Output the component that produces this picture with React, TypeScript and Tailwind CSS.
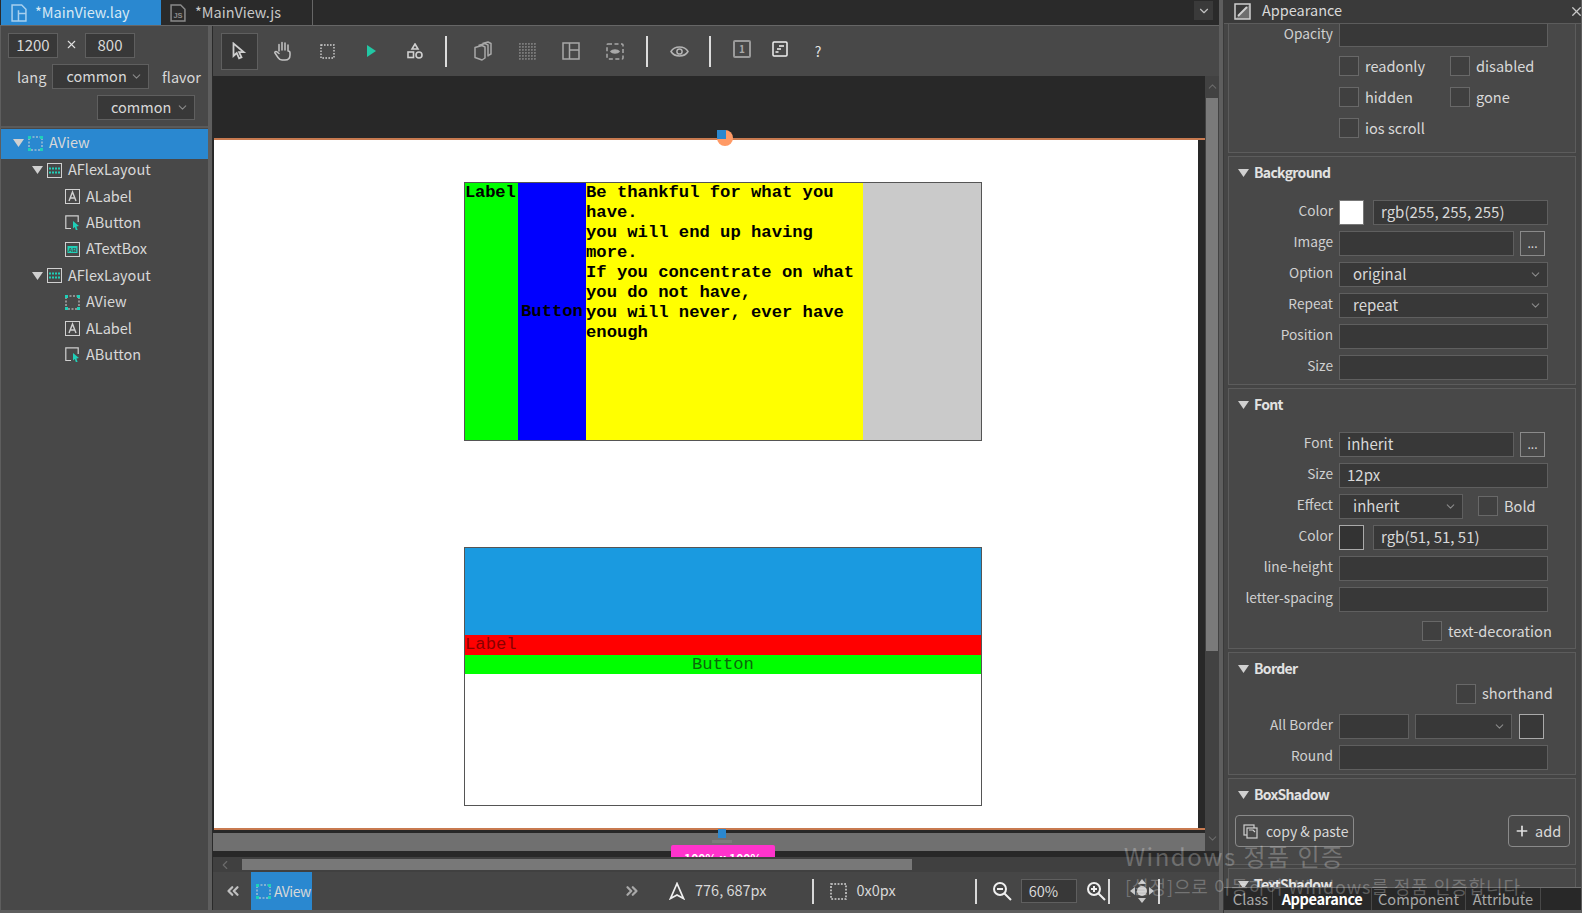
import type { ReactNode } from 'react';
import { ChevronDown, ChevronLeft, ChevronUp, ChevronsLeft, ChevronsRight, Plus, X } from 'lucide-react';

const TEAL = '#1fd0b8';

function Arrow() {
  return (
    <svg width="11" height="8" viewBox="0 0 11 8" className="shrink-0">
      <polygon points="0,0 11,0 5.5,8" fill="#d0d0d0" />
    </svg>
  );
}

function ViewIcon({ size = 15 }: { size?: number }) {
  return (
    <svg width={size} height={size} viewBox="0 0 15 15" className="shrink-0">
      <rect x="1" y="1" width="13" height="13" fill="none" stroke="#d8d8d8" strokeDasharray="2 1.5" />
      <rect x="0" y="0" width="3" height="3" fill={TEAL} />
      <rect x="12" y="0" width="3" height="3" fill={TEAL} />
      <rect x="0" y="12" width="3" height="3" fill={TEAL} />
      <rect x="12" y="12" width="3" height="3" fill={TEAL} />
    </svg>
  );
}

function FlexIcon() {
  return (
    <svg width="15" height="15" viewBox="0 0 15 15" className="shrink-0">
      <rect x="0.5" y="0.5" width="14" height="14" fill="none" stroke="#d0d0d0" />
      <path d="M2 5.5h11M2 9.5h11" stroke={TEAL} strokeWidth="2" strokeDasharray="2 1" />
    </svg>
  );
}

function LabelIcon() {
  return (
    <svg width="15" height="15" viewBox="0 0 15 15" className="shrink-0">
      <rect x="0.5" y="0.5" width="14" height="14" fill="none" stroke="#d0d0d0" />
      <path d="M4 12 7.5 3 11 12M5.2 9h4.6" fill="none" stroke="#d0d0d0" strokeWidth="1.4" />
    </svg>
  );
}

function ButtonIcon() {
  return (
    <svg width="15" height="15" viewBox="0 0 15 15" className="shrink-0">
      <path d="M6 13.5H.8V.8h12.4V7" fill="none" stroke="#d0d0d0" strokeWidth="1.2" />
      <polygon points="8,6 14,11 11.4,11.4 12.6,15 10.8,15 9.8,12 8,13.6" fill={TEAL} />
    </svg>
  );
}

function TextBoxIcon() {
  return (
    <svg width="15" height="15" viewBox="0 0 15 15" className="shrink-0">
      <rect x="0.5" y="0.5" width="14" height="14" fill="none" stroke="#d0d0d0" />
      <rect x="2.5" y="4" width="10" height="7" fill={TEAL} />
      <text x="7.5" y="9.8" textAnchor="middle" fontSize="6" fontWeight="700" fill="#484848" fontFamily="Liberation Sans, sans-serif">AB</text>
    </svg>
  );
}

function TreeRow({ level, icon, label, open, selected }: { level: number; icon: ReactNode; label: string; open?: boolean; selected?: boolean }) {
  const pad = level === 0 ? 'pl-[12px]' : level === 1 ? 'pl-[31px]' : 'pl-[64px]';
  return (
    <div className={`flex items-center ${pad} ${selected ? 'h-[30px] -mb-[2px] pb-[2px] bg-[#2a88d0]' : 'h-[26.4px]'}`}>
      {open && <span className="w-[15px] flex shrink-0"><Arrow /></span>}
      {icon}
      <span className="ml-[6px] text-[#d8d8d8] -translate-y-[1px]">{label}</span>
    </div>
  );
}

function DarkSelect({ value, className }: { value: string; className: string }) {
  return (
    <div className={`h-[25px] flex items-center justify-between bg-[#383838] border border-[#5f5f5f] pb-[1px] ${className}`}>
      <span className="text-[#d8d8d8]">{value}</span>
      <ChevronDown size={13} color="#8a8a8a" className="mr-[5px] shrink-0" />
    </div>
  );
}

function Input({ value, className }: { value?: string; className: string }) {
  return (
    <div className={`h-[25px] flex items-center bg-[#383838] border border-[#5f5f5f] text-[#d8d8d8] text-[15px] pl-[7px] pb-[1px] ${className}`}>{value}</div>
  );
}

function Check({ label, className }: { label: string; className?: string }) {
  return (
    <div className={`flex items-center ${className ?? ''}`}>
      <div className="w-[20px] h-[20px] border border-[#686868] bg-[#404040] shrink-0" />
      <span className="ml-[6px] text-[#d8d8d8] text-[14.6px] -translate-y-[1px]">{label}</span>
    </div>
  );
}

function Row({ label, children }: { label?: string; children: ReactNode }) {
  return (
    <div className="h-[31px] flex items-center">
      <span className="w-[104px] mr-[6px] text-right text-[13.7px] leading-none text-[#d0d0d0] whitespace-nowrap shrink-0 -translate-y-[2px]">{label}</span>
      {children}
    </div>
  );
}

function Section({ title, className, children }: { title: string; className: string; children: ReactNode }) {
  return (
    <div className={`shrink-0 mt-[3px] border border-[#5c5c5c] bg-[#484848] ${className}`}>
      <div className="h-[31px] flex items-center pl-[9px]">
        <Arrow />
        <span className="ml-[5px] font-bold text-[14px] text-[#e2e2e2] tracking-[-0.7px]">{title}</span>
      </div>
      {children}
    </div>
  );
}

function Tool({ children, selected, className }: { children: ReactNode; selected?: boolean; className?: string }) {
  return (
    <div className={`h-[37px] flex items-center justify-center shrink-0 ${selected ? 'bg-[#383838] border border-[#5f5f5f]' : ''} ${className ?? 'w-[44px]'}`}>
      {children}
    </div>
  );
}

function Sep({ className }: { className: string }) {
  return <div className={`w-[2px] h-[31px] bg-[#dcdcdc] shrink-0 ${className}`} />;
}

function Toolbar() {
  return (
    <div className="h-[50px] bg-[#484848] flex items-center pl-[8px] shrink-0">
      <Tool selected className="w-[37px]">
        <svg width="15" height="18" viewBox="0 0 15 18"><path d="M1.5 1.5v12.5l3.2-3 2.4 5.4 2.4-1-2.4-5.3h4.6z" fill="none" stroke="#cfcfcf" strokeWidth="1.8" /></svg>
      </Tool>
      <Tool className="w-[44px] ml-[3px]">
        <svg width="18" height="20" viewBox="0 0 18 20" fill="none" stroke="#c4c4c4" strokeWidth="1.5" strokeLinecap="round" strokeLinejoin="round"><path d="M5 10V3.5M8 9V1.5M11 9V2M14 10V4M14 10c1 0 2 .5 2 2v2c0 3-2 5-5 5H8c-2 0-3-1-4-2.5L1 12c-.6-1 .6-2 1.6-1.3L5 12.5" /></svg>
      </Tool>
      <Tool>
        <svg width="15" height="15" viewBox="0 0 15 15"><rect x="1" y="1" width="13" height="13" fill="none" stroke="#d0d0d0" strokeWidth="1.4" strokeDasharray="1.6 1.4" /></svg>
      </Tool>
      <Tool>
        <svg width="11" height="12" viewBox="0 0 11 12"><polygon points="1,0 10,6 1,12" fill="#22c7a4" /></svg>
      </Tool>
      <Tool>
        <svg width="16" height="16" viewBox="0 0 16 16" fill="none" stroke="#d0d0d0" strokeWidth="1.6"><path d="M8 1 11 6H5z" /><rect x="1" y="9" width="5.5" height="5.5" /><circle cx="12" cy="12" r="3" /></svg>
      </Tool>
      <Sep className="ml-[8px]" />
      <Tool className="w-[44px] ml-[14px]">
        <svg width="18" height="20" viewBox="0 0 18 20" fill="none" stroke="#a8a8a8" strokeWidth="1.5" strokeLinejoin="round"><path d="M1 6.5 8 4.5 11 6v11l-3 2-7-2.5z" /><path d="M4.5 4.5 11 2.5 14 4v11.5" /><path d="M8.5 2.5 14 1l3 1.5V13l-3 1.5" /></svg>
      </Tool>
      <Tool>
        <svg width="17" height="17" viewBox="0 0 17 17"><path d="M1 0v17M4 0v17M7 0v17M10 0v17M13 0v17M16 0v17M0 1h17M0 4h17M0 7h17M0 10h17M0 13h17M0 16h17" stroke="#8c8c8c" strokeDasharray="1.5 1.5" /></svg>
      </Tool>
      <Tool>
        <svg width="18" height="18" viewBox="0 0 18 18" fill="none" stroke="#a8a8a8" strokeWidth="1.5"><rect x="1" y="1" width="16" height="16" /><path d="M7.5 1v16M7.5 8H17" /></svg>
      </Tool>
      <Tool>
        <svg width="18" height="17" viewBox="0 0 18 17" fill="none" stroke="#a8a8a8" strokeWidth="1.5"><rect x="1" y="1" width="16" height="15" rx="1" strokeDasharray="4 2.5" /><path d="M5 8.5C6.5 6.5 11.5 6.5 13 8.5 11.5 10.5 6.5 10.5 5 8.5z" fill="#a8a8a8" /></svg>
      </Tool>
      <Sep className="ml-[9px]" />
      <Tool className="w-[44px] ml-[9px]">
        <svg width="19" height="13" viewBox="0 0 19 13" fill="none" stroke="#b4b4b4" strokeWidth="1.5"><path d="M1 6.5C4.5 .5 14.5 .5 18 6.5 14.5 12.5 4.5 12.5 1 6.5z" /><circle cx="9.5" cy="6.5" r="2.6" /></svg>
      </Tool>
      <Sep className="ml-[8px]" />
      <Tool className="w-[38px] ml-[12px]">
        <div className="w-[18px] h-[18px] rounded-[2px] border-2 border-[#9a9a9a] flex items-center justify-center text-[10px] font-bold text-[#a8a8a8] leading-none -translate-y-[2px]">1</div>
      </Tool>
      <Tool className="w-[38px]">
        <svg width="16" height="16" viewBox="0 0 16 16" fill="none" stroke="#f0f0f0" strokeWidth="1.5" className="-translate-y-[2px]"><rect x="1" y="1" width="14" height="14" rx="1" /><path d="M7 5h5M5 8h4M3.5 11h3" /></svg>
      </Tool>
      <Tool className="w-[38px]">
        <span className="text-[14px] text-[#e4e4e4] leading-none">?</span>
      </Tool>
    </div>
  );
}

function CanvasBoxes() {
  return (
    <div className="pl-[250px] pt-[42px]">
      <div className="w-[518px] h-[259px] border border-[#555] flex font-['Liberation_Mono',monospace] font-bold text-[17.2px] leading-[20px] text-black">
        <div className="w-[53px] bg-[#00ff00] tracking-[-0.2px]">Label</div>
        <div className="w-[68px] bg-[#0000ff] flex items-center justify-center">Button</div>
        <div className="w-[277px] bg-[#ffff00]">
          Be thankful for what you have.<br />
          you will end up having more.<br />
          If you concentrate on what you do not have,<br />
          you will never, ever have enough
        </div>
        <div className="flex-1 bg-[#cacaca]" />
      </div>
      <div className="mt-[106px] w-[518px] h-[259px] border border-[#555] flex flex-col font-['Liberation_Mono',monospace] text-[17.2px] leading-[20px] text-[#222]">
        <div className="h-[87px] bg-[#1a9ae0]" />
        <div className="h-[20px] bg-[#ff0000] text-[#8a0000]">Label</div>
        <div className="h-[19px] bg-[#00ff00] text-center text-[#0a6a0a]">Button</div>
      </div>
    </div>
  );
}

function Center() {
  return (
    <div className="flex-1 flex flex-col min-w-0">
      <Toolbar />
      <div className="flex-1 flex min-h-0 bg-[#282828]">
        <div className="flex-1 flex flex-col min-w-0">
          <div className="h-[62px] shrink-0" />
          <div className="h-[692px] shrink-0 border-y-2 border-[#c87a50] ml-[1px]">
            <div className="relative h-full bg-white mr-[7px]">
              <CanvasBoxes />
              <div className="absolute left-[503px] top-[-10px] w-[16px] h-[16px] rounded-full bg-[#ff9a66]" />
              <div className="absolute left-[503px] top-[-10px] w-[9px] h-[9px] bg-[#2a88d0]" />
            </div>
          </div>
          <div className="relative h-[18px] mt-[3px] bg-[#707070] shrink-0">
            <div className="absolute left-[505px] top-[-4px] w-[8px] h-[9px] bg-[#2a88d0]" />
            <div className="absolute left-[499px] top-[7px] w-[20px] h-[3px] bg-[#7c7c7c]" />
            <div className="absolute left-[458px] top-[12px] w-[104px] h-[12px] overflow-hidden rounded-t-[2px] bg-[#ff33cc] pt-[6px] text-center text-[12px] leading-[14px] font-bold text-white z-10">100% x 100%</div>
          </div>
        </div>
        <div className="w-[14px] bg-[#424242] flex flex-col items-center shrink-0 mb-[6px]">
          <ChevronUp size={13} color="#6a6a6a" className="mt-[4px]" />
          <div className="w-[12px] h-[553px] mt-[5px] bg-[#7a7a7a]" />
          <div className="flex-1" />
          <ChevronDown size={13} color="#6a6a6a" className="mb-[6px]" />
        </div>
      </div>
      <div className="h-[15px] bg-[#404040] flex items-center shrink-0 relative">
        <ChevronLeft size={14} color="#6a6a6a" className="ml-[5px]" />
        <div className="ml-[10px] w-[670px] h-[11px] bg-[#787878]" />
      </div>
      <div className="h-[38px] bg-[#464646] flex items-center shrink-0 text-[#d8d8d8] pr-[6px]">
        <ChevronsLeft size={18} color="#c0c0c0" strokeWidth={3} className="ml-[11px]" />
        <div className="ml-[9px] w-[61px] h-full bg-[#2a88d0] flex items-center pl-[5px]">
          <ViewIcon />
          <span className="ml-[3px] text-[14px] tracking-[-0.5px]">AView</span>
        </div>
        <ChevronsRight size={18} color="#a8a8a8" strokeWidth={3} className="ml-[311px]" />
        <svg width="16" height="18" viewBox="0 0 16 18" className="ml-[28px]" fill="none" stroke="#f0f0f0" strokeWidth="1.7"><path d="M8 1.5 1.5 16.5 8 13l6.5 3.5z" /></svg>
        <span className="ml-[10px] text-[14.5px] -translate-y-[1px]">776, 687px</span>
        <div className="ml-[45px] w-[2px] h-[25px] bg-[#d8d8d8]" />
        <svg width="17" height="17" viewBox="0 0 17 17" className="ml-[16px]"><rect x="1" y="1" width="15" height="15" fill="none" stroke="#d8d8d8" strokeWidth="1.5" strokeDasharray="1.8 1.5" /></svg>
        <span className="ml-[10px] text-[14.5px] -translate-y-[1px]">0x0px</span>
        <div className="ml-[79px] w-[2px] h-[25px] bg-[#d8d8d8]" />
        <svg width="20" height="20" viewBox="0 0 20 20" className="ml-[15px]" fill="none" stroke="#f0f0f0" strokeWidth="2"><circle cx="8" cy="8" r="6" /><path d="M12.5 12.5 19 19M5 8h6" /></svg>
        <div className="ml-[9px] w-[56px] h-[24px] bg-[#383838] border border-[#5f5f5f] pl-[7px] flex items-center text-[14.5px]">60%</div>
        <svg width="20" height="20" viewBox="0 0 20 20" className="ml-[9px]" fill="none" stroke="#f0f0f0" strokeWidth="2"><circle cx="8" cy="8" r="6" /><path d="M12.5 12.5 19 19M5 8h6M8 5v6" /></svg>
        <div className="ml-[2px] w-[2px] h-[25px] bg-[#d8d8d8]" />
        <svg width="30" height="30" viewBox="0 0 30 30" className="ml-[17px] shrink-0" fill="#c8c8c8"><polygon points="15,3 19,8 11,8" /><polygon points="15,27 19,22 11,22" /><polygon points="3,15 8,11 8,19" /><polygon points="27,15 22,11 22,19" /><circle cx="15" cy="15" r="5" /></svg>
        <div className="ml-[1px] w-[2px] h-[25px] bg-[#d8d8d8]" />
      </div>
    </div>
  );
}

function LeftPanel() {
  return (
    <div className="w-[207px] ml-[1px] bg-[#484848] flex flex-col shrink-0 text-[14.5px]">
      <div className="h-[100px] pt-[7px] px-[7px] shrink-0 relative">
        <div className="flex items-center">
          <Input value="1200" className="w-[50px] justify-center !pl-0" />
          <X size={13} color="#e0e0e0" className="mx-[7px] -translate-y-[1px]" />
          <Input value="800" className="w-[50px] justify-center !pl-0" />
        </div>
        <div className="flex items-center mt-[6px]">
          <span className="ml-[9px] w-[36px] text-[#d8d8d8]">lang</span>
          <DarkSelect value="common" className="w-[98px] pl-[13px]" />
          <span className="ml-[13px] text-[#d8d8d8]">flavor</span>
        </div>
        <div className="mt-[6px] flex">
          <DarkSelect value="common" className="w-[98px] ml-[89px] pl-[13px]" />
        </div>
      </div>
      <div className="h-[2px] bg-[#5a5a5a] shrink-0" />
      <div className="pt-[1px]">
        <TreeRow level={0} open selected icon={<ViewIcon />} label="AView" />
        <TreeRow level={1} open icon={<FlexIcon />} label="AFlexLayout" />
        <TreeRow level={2} icon={<LabelIcon />} label="ALabel" />
        <TreeRow level={2} icon={<ButtonIcon />} label="AButton" />
        <TreeRow level={2} icon={<TextBoxIcon />} label="ATextBox" />
        <TreeRow level={1} open icon={<FlexIcon />} label="AFlexLayout" />
        <TreeRow level={2} icon={<ViewIcon />} label="AView" />
        <TreeRow level={2} icon={<LabelIcon />} label="ALabel" />
        <TreeRow level={2} icon={<ButtonIcon />} label="AButton" />
      </div>
    </div>
  );
}

function RightPanel() {
  return (
    <div className="w-[357px] flex flex-col bg-[#454545] shrink-0 relative overflow-hidden">
      <div className="h-[24px] bg-[#3a3a3a] border-b border-[#5c5c5c] flex items-center pl-[10px] shrink-0">
        <svg width="17" height="17" viewBox="0 0 17 17" fill="none" stroke="#d0d0d0" strokeWidth="1.5"><rect x="1" y="1" width="15" height="15" /><path d="M4 13 13 4" strokeWidth="2" /><polygon points="16,1 16,16 1,16" fill="#d0d0d0" opacity="0.35" stroke="none" /></svg>
        <span className="ml-[11px] text-[14.5px] text-[#d8d8d8] -translate-y-[2px]">Appearance</span>
        <X size={15} color="#c8c8c8" className="ml-auto -mr-[3px]" />
      </div>
      <div className="flex-1 min-h-0 overflow-hidden pl-[4px] pr-[5px] flex flex-col text-[15px]">
        <div className="h-[130px] -mt-[1px] border border-t-0 border-[#5c5c5c] bg-[#484848] shrink-0">
          <div className="h-[24px] flex items-start">
            <span className="w-[104px] mr-[6px] text-right text-[13.7px] leading-[20px] text-[#d0d0d0]">Opacity</span>
            <Input className="w-[209px] !h-[24px] border-t-0" />
          </div>
          <div className="pl-[110px] pt-[4px]">
            <div className="h-[31px] flex items-center"><Check label="readonly" className="w-[111px]" /><Check label="disabled" /></div>
            <div className="h-[31px] flex items-center"><Check label="hidden" className="w-[111px]" /><Check label="gone" /></div>
            <div className="h-[31px] flex items-center"><Check label="ios scroll" /></div>
          </div>
        </div>
        <Section title="Background" className="h-[229px]">
          <div className="pt-[9px]">
            <Row label="Color">
              <div className="w-[25px] h-[25px] bg-white border border-[#777]" />
              <Input value="rgb(255, 255, 255)" className="ml-[9px] w-[175px]" />
            </Row>
            <Row label="Image">
              <Input className="w-[175px]" />
              <div className="ml-[6px] w-[25px] h-[25px] border border-[#8a8a8a] flex items-center justify-center text-[#d8d8d8] text-[12px] leading-none pb-[2px]">...</div>
            </Row>
            <Row label="Option"><DarkSelect value="original" className="w-[209px] pl-[13px]" /></Row>
            <Row label="Repeat"><DarkSelect value="repeat" className="w-[209px] pl-[13px]" /></Row>
            <Row label="Position"><Input className="w-[209px]" /></Row>
            <Row label="Size"><Input className="w-[209px]" /></Row>
          </div>
        </Section>
        <Section title="Font" className="h-[261px]">
          <div className="pt-[9px]">
            <Row label="Font">
              <Input value="inherit" className="w-[175px]" />
              <div className="ml-[6px] w-[25px] h-[25px] border border-[#8a8a8a] flex items-center justify-center text-[#d8d8d8] text-[12px] leading-none pb-[2px]">...</div>
            </Row>
            <Row label="Size"><Input value="12px" className="w-[209px]" /></Row>
            <Row label="Effect">
              <DarkSelect value="inherit" className="w-[124px] pl-[13px]" />
              <Check label="Bold" className="ml-[15px]" />
            </Row>
            <Row label="Color">
              <div className="w-[25px] h-[25px] bg-[#333] border border-[#aaa]" />
              <Input value="rgb(51, 51, 51)" className="ml-[9px] w-[175px]" />
            </Row>
            <Row label="line-height"><Input className="w-[209px]" /></Row>
            <Row label="letter-spacing"><Input className="w-[209px]" /></Row>
            <div className="h-[33px] flex items-center pl-[193px]"><Check label="text-decoration" /></div>
          </div>
        </Section>
        <Section title="Border" className="h-[123px]">
          <div className="h-[26px] -mt-[3px] mb-[4px] flex items-center pl-[227px]"><Check label="shorthand" /></div>
          <Row label="All Border">
            <Input className="w-[70px]" />
            <DarkSelect value="" className="ml-[6px] w-[97px]" />
            <div className="ml-[7px] w-[25px] h-[25px] bg-[#383838] border border-[#aaa]" />
          </Row>
          <Row label="Round"><Input className="w-[209px]" /></Row>
        </Section>
        <Section title="BoxShadow" className="h-[87px]">
          <div className="flex justify-between pl-[6px] pr-[5px] pt-[5px]">
            <div className="w-[119px] h-[32px] rounded-[4px] border border-[#8a8a8a] flex items-center pl-[7px] text-[14px] text-[#d8d8d8]">
              <svg width="15" height="15" viewBox="0 0 15 15" fill="none" stroke="#d0d0d0" strokeWidth="1.2"><rect x="1" y="1" width="10" height="10" /><rect x="4" y="4" width="10" height="10" fill="#484848" /><path d="M6 6h4l2 2" /></svg>
              <span className="ml-[8px]">copy &amp; paste</span>
            </div>
            <div className="w-[62px] h-[32px] rounded-[4px] border border-[#8a8a8a] flex items-center pl-[5px] text-[14.5px] text-[#d8d8d8]">
              <Plus size={16} color="#e0e0e0" strokeWidth={2.5} />
              <span className="ml-[5px]">add</span>
            </div>
          </div>
        </Section>
        <Section title="TextShadow" className="h-[60px]"><div /></Section>
      </div>
      <div className="absolute left-0 right-0 bottom-0 h-[23px] bg-[#282828] border-t border-[#707070] flex text-[14.6px] leading-[22px] pl-[5px]">
        <div className="w-[44px] text-center text-[#a8a8a8] border-r border-[#484848]">Class</div>
        <div className="w-[99px] text-center font-bold text-white tracking-[-0.4px] border-r border-[#484848]">Appearance</div>
        <div className="w-[94px] text-center text-[#a8a8a8] border-r border-[#484848]">Component</div>
        <div className="w-[75px] text-center text-[#a8a8a8] border-r border-[#484848]">Attribute</div>
      </div>
    </div>
  );
}

export default function App() {
  return (
    <div className="relative w-[1582px] h-[913px] overflow-hidden flex bg-[#5e5e5e] pb-[3px] font-['Noto_Sans_CJK_KR','Noto_Sans',sans-serif] text-[15px]">
      <div className="w-[1219px] flex flex-col shrink-0">
        <div className="h-[26px] bg-[#2a2a2a] border-b border-[#666] flex items-stretch text-[14.5px] shrink-0">
          <div className="ml-[1px] w-[160px] bg-[#2a88d0] flex items-center pl-[10px] text-[#d8e8f4]">
            <svg width="16" height="20" viewBox="0 0 15 17" fill="none" stroke="#a8d0ee" strokeWidth="1.4"><path d="M1 1h9l4 4v11H1zM7 6v10M7 9h7" /></svg>
            <span className="ml-[8px] -translate-y-[1px]">*MainView.lay</span>
          </div>
          <div className="w-[152px] border-r border-[#666] flex items-center pl-[9px] text-[#c8c8c8]">
            <svg width="16" height="20" viewBox="0 0 15 17" fill="none" stroke="#8a8a8a" strokeWidth="1.4"><path d="M1 1h9l4 4v11H1z" /><text x="7.5" y="13" textAnchor="middle" fontSize="7" fontWeight="700" fill="#8a8a8a" stroke="none" fontFamily="Liberation Sans, sans-serif">JS</text></svg>
            <span className="ml-[9px] -translate-y-[1px]">*MainView.js</span>
          </div>
          <div className="ml-auto mr-[6px] mt-[1px] w-[19px] h-[19px] bg-[#3a3a3a] flex items-center justify-center">
            <ChevronDown size={14} color="#c0c0c0" />
          </div>
        </div>
        <div className="flex-1 flex min-h-0">
          <LeftPanel />
          <div className="w-[4px] bg-[#5e5e5e] shrink-0" />
          <div className="w-[1px] bg-[#2a2a2a] shrink-0" />
          <Center />
        </div>
      </div>
      <div className="w-[5px] bg-[#5e5e5e] border-r border-[#3a3a3a] shrink-0 h-[913px]" />
      <RightPanel />
      <div className="absolute left-[1124px] top-[840px] text-[24px] leading-[32px] tracking-[1.5px] text-white/25 whitespace-nowrap pointer-events-none">Windows 정품 인증</div>
      <div className="absolute left-[1125px] top-[874px] text-[18px] leading-[24px] tracking-[0.9px] text-white/25 whitespace-nowrap pointer-events-none">[설정]으로 이동하여 Windows를 정품 인증합니다.</div>
    </div>
  );
}
